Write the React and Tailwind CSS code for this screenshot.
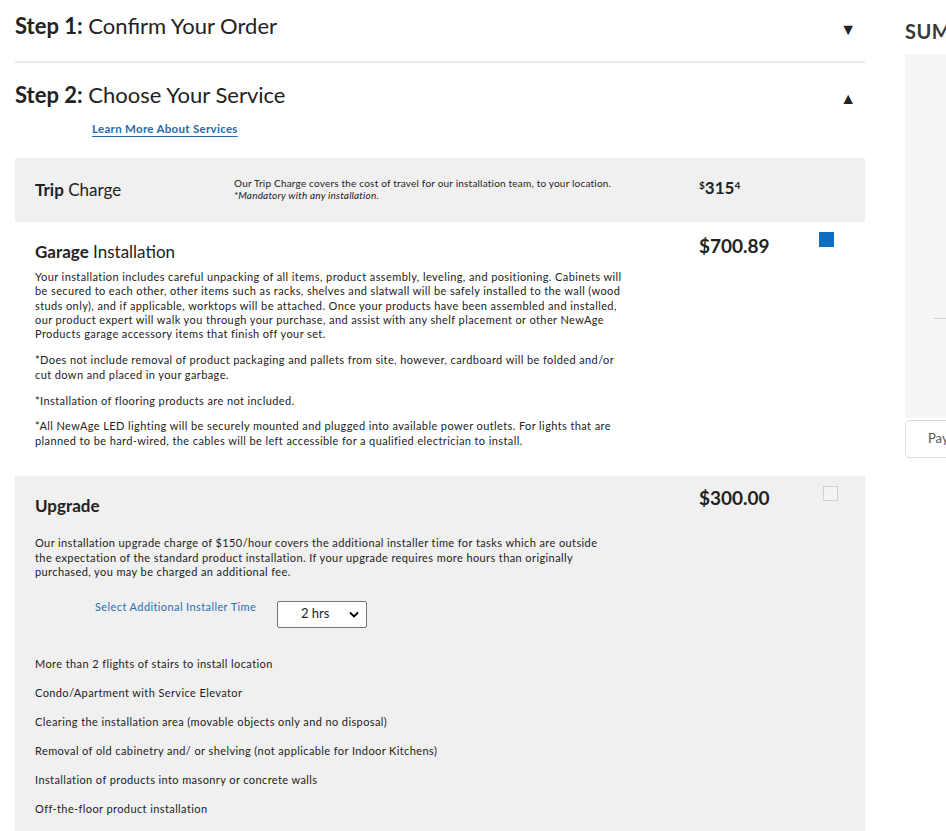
import React from "react";

const font = { fontFamily: "Lato, 'Open Sans', sans-serif" };

export default function App() {
  return (
    <div className="w-[946px] h-[831px] overflow-hidden bg-white text-[#222]" style={font}>
      <div className="flex gap-[40px]">
        {/* Left column */}
        <div className="w-[850px] shrink-0 ml-[15px]">
          {/* Step 1 */}
          <div className="h-[63px] flex items-start justify-between pt-[12px] border-b-2 border-[#ebebeb]">
            <h2 className="text-[22px] leading-[28px]"><span className="font-bold">Step 1:</span> Confirm Your Order</h2>
            <span className="text-[16px] leading-none mr-[9px] mt-[9px]">▼</span>
          </div>
          {/* Step 2 */}
          <div className="pt-[18px] flex items-start justify-between">
            <h2 className="text-[22px] leading-[28px]"><span className="font-bold">Step 2:</span> Choose Your Service</h2>
            <span className="text-[16px] leading-none mr-[9px] mt-[9px]">▲</span>
          </div>
          <div className="pl-[77px] pt-[6px] h-[49px]">
            <a href="#" className="text-[11.5px] tracking-[0.3px] font-bold text-[#1f6cb0] underline underline-offset-[3px]">Learn More About Services</a>
          </div>

          {/* Trip charge */}
          <div className="bg-[#f0f0f0] h-[64px] flex items-center">
            <div className="w-[219px] pl-[20px] text-[17px]"><span className="font-bold">Trip</span> Charge</div>
            <div className="w-[465px] text-[10px] leading-[12px] tracking-[0.2px] -mt-[3px]">
              <div>Our Trip Charge covers the cost of travel for our installation team, to your location.</div>
              <div className="italic">*Mandatory with any installation.</div>
            </div>
            <div className="text-[17px] font-bold -mt-[4px]">
              <sup className="text-[10px]">$</sup>315<sup className="text-[10px]">4</sup>
            </div>
          </div>

          {/* Garage installation */}
          <div className="h-[254px] flex">
            <div className="w-[684px] pl-[20px] pt-[19px]">
              <h3 className="text-[17px] leading-[22px]"><span className="font-bold">Garage</span> Installation</h3>
              <div className="text-[11px] leading-[14.3px] tracking-[0.4px] w-[650px] mt-[7px] whitespace-nowrap">
                <p>Your installation includes careful unpacking of all items, product assembly, leveling, and positioning. Cabinets will<br />be secured to each other, other items such as racks, shelves and slatwall will be safely installed to the wall (wood<br />studs only), and if applicable, worktops will be attached. Once your products have been assembled and installed,<br />our product expert will walk you through your purchase, and assist with any shelf placement or other NewAge<br />Products garage accessory items that finish off your set.</p>
                <p className="mt-[12px]">*Does not include removal of product packaging and pallets from site, however, cardboard will be folded and/or<br />cut down and placed in your garbage.</p>
                <p className="mt-[12px]">*Installation of flooring products are not included.</p>
                <p className="mt-[11px]">*All NewAge LED lighting will be securely mounted and plugged into available power outlets. For lights that are<br />planned to be hard-wired, the cables will be left accessible for a qualified electrician to install.</p>
              </div>
            </div>
            <div className="w-[120px] pt-[10px] text-[19px] font-bold">$700.89</div>
            <div className="pt-[10px]">
              <div className="w-[15px] h-[15px] bg-[#0a6fc2]"></div>
            </div>
          </div>

          {/* Upgrade */}
          <div className="bg-[#f0f0f0] h-[360px] flex">
            <div className="w-[684px] pl-[20px] pt-[19px]">
              <h3 className="text-[17px] leading-[22px] font-bold">Upgrade</h3>
              <p className="text-[11px] leading-[14.5px] tracking-[0.4px] w-[640px] mt-[19px] whitespace-nowrap">Our installation upgrade charge of $150/hour covers the additional installer time for tasks which are outside<br />the expectation of the standard product installation. If your upgrade requires more hours than originally<br />purchased, you may be charged an additional fee.</p>
              <div className="flex items-start mt-[21px] pl-[60px]">
                <span className="text-[11px] tracking-[0.4px] text-[#2a6db0] w-[182px] -mt-[2px]">Select Additional Installer Time</span>
                <div className="w-[90px] h-[27px] bg-white border border-[#767676] rounded-[2px] flex items-center justify-between pl-[23px] pr-[7px] text-[13px]">
                  <span>2 hrs</span>
                  <svg width="10" height="7" viewBox="0 0 10 7"><path d="M1 1.5 L5 5.5 L9 1.5" stroke="#000" strokeWidth="1.8" fill="none" /></svg>
                </div>
              </div>
              <ul className="text-[11px] tracking-[0.4px] mt-[29px] flex flex-col gap-[15px] leading-[14px]">
                <li>More than 2 flights of stairs to install location</li>
                <li>Condo/Apartment with Service Elevator</li>
                <li>Clearing the installation area (movable objects only and no disposal)</li>
                <li>Removal of old cabinetry and/ or shelving (not applicable for Indoor Kitchens)</li>
                <li>Installation of products into masonry or concrete walls</li>
                <li>Off-the-floor product installation</li>
              </ul>
            </div>
            <div className="w-[124px] pt-[8px] text-[19px] font-bold">$300.00</div>
            <div className="pt-[10px]">
              <div className="w-[15px] h-[15px] border border-[#d0d0d0] bg-[#f3f3f3]"></div>
            </div>
          </div>
        </div>

        {/* Right column */}
        <div className="w-[300px] shrink-0">
          <h2 className="text-[20px] font-bold text-[#3a3a3a] pt-[18px] leading-[26px] tracking-wide">SUMMARY</h2>
          <div className="mt-[10px] h-[364px] bg-[#f5f5f5] relative">
            <div className="absolute left-[29px] right-[20px] top-[264px] border-t border-[#cfcfcf]"></div>
          </div>
          <div className="mt-[2px] h-[38px] border border-[#dcdcdc] rounded-[5px] flex items-center pl-[22px] text-[13px] text-[#555]">Pay with card</div>
        </div>
      </div>
    </div>
  );
}
